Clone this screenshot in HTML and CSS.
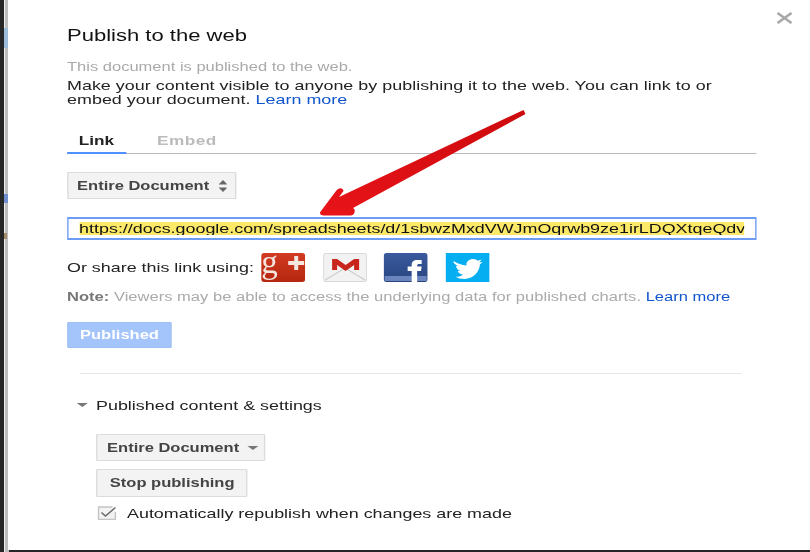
FILE: index.html
```html
<!DOCTYPE html>
<html lang="en">
<head>
<meta charset="utf-8">
<title>Publish to the web</title>
<link rel="stylesheet" href="styles.css">
</head>
<body>
<div class="edge"><span class="edge-blue"></span><span class="edge-back"></span><span class="edge-orange"></span></div>
<main class="sheet">
  <div class="dialog">
    <h1 class="title">Publish to the web</h1>
    <p class="status">This document is published to the web.</p>
    <p class="intro">Make your content visible to anyone by publishing it to the web. You can link to or embed your document. <a class="link" href="#">Learn more</a></p>
    <div class="tabs"><span class="tab tab-on">Link</span><span class="tab tab-off">Embed</span></div>
    <div class="btn select-a">Entire Document
      <svg class="updown" viewBox="0 0 8 12" preserveAspectRatio="none"><path d="M4 0 8 4.500H0zM4 12 0 7.500H8z"/></svg>
    </div>
    <div class="url"><div class="url-mark">https://docs.google.com/spreadsheets/d/1sbwzMxdVWJmOqrwb9ze1irLDQXtqeQdvWq</div></div>
    <div class="share">
      <span class="share-label">Or share this link using:</span>
      <svg class="icon i-g" viewBox="0 0 44 29" preserveAspectRatio="none">
        <defs><linearGradient id="gp" x1="0" y1="0" x2="0" y2="1"><stop offset="0" stop-color="#d23a22"/><stop offset="1" stop-color="#b5270f"/></linearGradient></defs>
        <rect width="44" height="29" rx="3" fill="url(#gp)"/>
        <text x="0" y="20" class="g-letter">g</text>
        <path d="M27 8h6V3h4v5h6v4h-6v5h-4v-5h-6z" fill="#f5e6e0"/>
      </svg>
      <svg class="icon i-m" viewBox="0 0 44 29" preserveAspectRatio="none">
        <rect x=".5" y=".5" width="43" height="28" rx="2" fill="#f2f2f2" stroke="#d9d9d9"/>
        <path d="M2 27 22 15 42 27" fill="none" stroke="#c9c9c9"/>
        <path d="M9 17V6h5l8.500 6L31 6h5v11h-5v-5l-8.500 6-8.500-6v5z" fill="#c8261c"/>
      </svg>
      <svg class="icon i-f" viewBox="0 0 44 29" preserveAspectRatio="none">
        <defs><linearGradient id="fb" x1="0" y1="0" x2="0" y2="1"><stop offset="0" stop-color="#3a5a9e"/><stop offset="1" stop-color="#27447f"/></linearGradient></defs>
        <rect width="44" height="29" rx="3" fill="url(#fb)"/>
        <rect x="1" y="23" width="42" height="5" fill="#6a84bd"/>
        <path d="M28 29V18h-4v-4.500h4V12c0-3.500 2-5 5.500-5H38v4h-2.500c-1.500 0-2 .5-2 2v.5H38l-.7 4.500h-3.800v11z" fill="#fff"/>
      </svg>
      <svg class="icon i-t" viewBox="0 0 44 29" preserveAspectRatio="none">
        <rect width="44" height="29" fill="#05aef0"/>
        <path d="M8 8c4 2.500 8 4 13 4.500C20 8.500 24 6 27.500 6c2 0 3.500 .8 4.500 1.800l4-1.300-2.200 3 3.200-.6-2.700 2.700C34 19 27.500 26 19 26c-3.500 0-6.500-.8-9-2.200 2.800 .2 5.500-.5 7.500-2.300-2.600 0-4.500-1.300-5.300-3.500h2.700c-2.700-.9-4.400-2.800-4.400-5.300l2.700 .6C10 11.500 7.500 10.500 8 8z" fill="#fff"/>
      </svg>
    </div>
    <p class="note"><b>Note:</b> Viewers may be able to access the underlying data for published charts. <a class="link" href="#">Learn more</a></p>
    <div class="published">Published</div>
    <hr class="rule">
    <div class="section-head"><span class="caret"></span>Published content &amp; settings</div>
    <div class="section">
      <div class="btn select-b">Entire Document<span class="caret caret-btn"></span></div>
      <div class="btn stop">Stop publishing</div>
      <label class="auto">
        <svg class="check" viewBox="0 0 19 14" preserveAspectRatio="none"><path d="M15 1H1v12.500h17V6" fill="#f2f2f2" stroke="#c4c4c4" stroke-width="1.500"/><path d="M4 6.500 8 10 18 1.500" fill="none" stroke="#666" stroke-width="1.400"/></svg>
        Automatically republish when changes are made
      </label>
    </div>
  </div>
  <svg class="arrow" viewBox="0 0 810 552">
    <defs><linearGradient id="red" x1="0" y1="1" x2="1" y2="0"><stop offset="0" stop-color="#e8141a"/><stop offset="1" stop-color="#cc0a0c"/></linearGradient></defs>
    <path d="M523.500 110 525.500 114 353 208C356 209 355 215.500 351 215.500H324C320 215.500 319 213 321 211L336 191C339 187 343 187.500 343.500 191L339 197z" fill="url(#red)"/>
  </svg>
  <svg class="close" viewBox="0 0 16 12"><path d="M1 1 15 11M15 1 1 11" stroke="#a8a8a8" stroke-width="2.600" fill="none"/></svg>
</main>
</body>
</html>
```
FILE: styles.css
```css
html, body { margin: 0; height: 100%; }
body {
  display: flex;
  width: 810px;
  height: 552px;
  overflow: hidden;
  background: #262626;
  font-family: "Liberation Sans", Arial, sans-serif;
  color: #222;
}
.edge {
  position: relative;
  width: 4px;
  border-right: 1px solid #ececec;
  box-shadow: 3px 0 0 1px #bdbdbd;
  height: 552px;
  flex: none;
  margin-right: 3px;
}
.edge-blue { position: absolute; left: 4px; top: 28px; width: 4px; height: 20px; background: #9dbcdc; }
.edge-back { position: absolute; left: 4px; top: 194px; width: 4px; height: 9px; background: #6f8ed0; }
.edge-orange { position: absolute; left: 4px; top: 233px; width: 3px; height: 6px; background: #a88a6a; }
.sheet { position: relative; flex: 1; height: 550px; background: #fff; overflow: hidden; }
.dialog {
  width: 501.450px;
  padding: 26px 0 0 42.880px;
  transform: scaleX(1.376);
  transform-origin: 0 0;
  filter: blur(.35px);
}
.title { margin: 0; font-size: 16px; line-height: 20px; font-weight: 400; color: #111; }
.status { margin: 14px 0 0; font-size: 12px; line-height: 14px; color: #aaa; }
.intro { margin: 5px 0 0; font-size: 13px; line-height: 14px; letter-spacing: .02px; color: #222; }
.link { color: #15c; text-decoration: none; }
.tabs { display: flex; margin-top: 25px; height: 22px; border-bottom: 1px solid #bbb; box-sizing: border-box; }
.tab { box-sizing: border-box; height: 22px; font-size: 12.500px; font-weight: 700; line-height: 18px; text-align: center; }
.tab-on { width: 42.900px; color: #222; border-bottom: 2px solid #4d90fe; }
.tab-off { margin-left: 22.500px; color: #bbb; letter-spacing: .35px; }
.btn {
  display: flex;
  align-items: center;
  box-sizing: border-box;
  background: #f3f3f3;
  border: 1px solid #dcdcdc;
  border-radius: 1px;
  font-size: 12px;
  font-weight: 700;
  color: #444;
}
.select-a { width: 122.800px; height: 27px; margin-top: 18px; padding-left: 6.300px; }
.updown { width: 6.500px; height: 12px; margin-left: 6.500px; fill: #666; }
.url { box-sizing: border-box; height: 23px; margin-top: 18px; padding: 3px 8px 3px 7.800px; border: solid #6d9cf5; border-width: 2px 1.450px; }
.url-mark { overflow: hidden; height: 13px; background: #fde968; font-size: 13px; line-height: 14px; white-space: nowrap; color: #111; }
.share { display: flex; align-items: center; height: 29px; margin-top: 13px; }
.share-label { flex: none; width: 135.200px; font-size: 13px; color: #222; white-space: nowrap; }
.icon { flex: none; width: 32px; height: 29px; }
.i-g { margin-left: 6px; }
.i-m { margin-left: 13.100px; }
.i-f { margin-left: 11.600px; }
.i-t { margin-left: 13.100px; }
.g-letter { font-family: "Liberation Serif", serif; font-size: 33px; fill: #f5e6e0; }
.note { margin: 8px 0 0; font-size: 12px; line-height: 14px; letter-spacing: .015px; color: #aaa; white-space: nowrap; }
.note b { color: #777; }
.published {
  box-sizing: border-box;
  width: 76.300px;
  height: 26px;
  margin-top: 18px;
  background: #a3c5fb;
  border: 1px solid #9fc0f5;
  border-radius: 1px;
  color: #fff;
  font-size: 12px;
  font-weight: 700;
  line-height: 24px;
  text-align: center;
}
.rule { width: 481px; height: 1px; margin: 25px 0 0 9.450px; border: 0; background: #e5e5e5; }
.section-head { display: flex; align-items: center; height: 16px; margin: 23px 0 0 7.300px; font-size: 13px; color: #222; }
.caret { width: 0; height: 0; margin-right: 5.800px; border: 4px solid transparent; border-top-color: #777; border-bottom: 0; }
.section { margin-left: 21.100px; }
.select-b { width: 122.800px; height: 27px; margin-top: 21px; padding-left: 7px; }
.caret-btn { margin: 1px 0 0 5.800px; }
.stop { width: 109.700px; height: 28px; margin-top: 8px; padding-left: 9px; }
.auto { display: flex; align-items: center; height: 16px; margin-top: 8px; font-size: 13px; color: #222; }
.check { flex: none; width: 13.800px; height: 14px; margin: 0 7.300px 0 1.450px; }
.arrow { position: absolute; left: -8px; top: 0; width: 810px; height: 552px; pointer-events: none; }
.close { position: absolute; left: 768px; top: 12px; width: 17px; height: 12px; }
```
